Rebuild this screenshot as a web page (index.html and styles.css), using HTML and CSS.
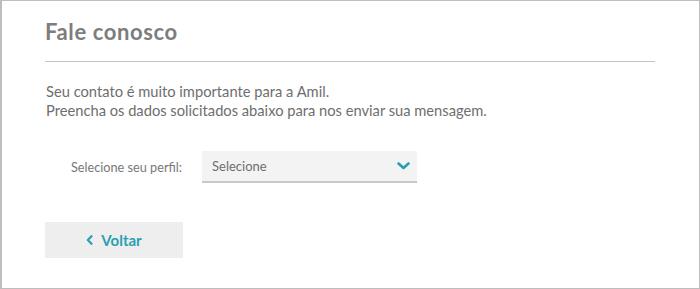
FILE: index.html
```html
<!DOCTYPE html>
<html lang="pt-BR">
<head>
<meta charset="utf-8">
<title>Fale conosco</title>
<link rel="stylesheet" href="styles.css">
</head>
<body>
<div class="frame">
  <div class="content">
    <h1 class="title">Fale conosco</h1>
    <hr class="rule">
    <p class="intro">Seu contato é muito importante para a Amil.<br>Preencha os dados solicitados abaixo para nos enviar sua mensagem.</p>
    <div class="field">
      <label class="label">Selecione seu perfil:</label>
      <div class="select">
        <span class="select-text">Selecione</span>
        <svg class="chevron" width="13" height="8" viewBox="0 0 13 8"><path d="M1.5 1.5 L6.5 6 L11.5 1.5" fill="none" stroke="#2a9fb0" stroke-width="2.6" stroke-linecap="round" stroke-linejoin="round"/></svg>
      </div>
    </div>
    <button class="back">
      <svg class="back-icon" width="7" height="10" viewBox="0 0 7 10"><path d="M5.5 1.2 L1.8 5 L5.5 8.8" fill="none" stroke="#2a9fb0" stroke-width="2.2" stroke-linecap="round" stroke-linejoin="round"/></svg>
      <span>Voltar</span>
    </button>
  </div>
</div>
</body>
</html>
```
FILE: styles.css
```css
* { box-sizing: border-box; }
html, body { margin: 0; padding: 0; background: #fff; }
body { font-family: Lato, "Open Sans", sans-serif; }
.frame {
  width: 700px;
  height: 289px;
  border: 1px solid #bdbdbd;
  border-left-width: 2px;
  background: #fff;
}
.content {
  padding: 17px 44px 0 43px;
}
.title {
  margin: 0;
  font-size: 22px;
  font-weight: 700;
  color: #7d7d7d;
  line-height: 28px;
  letter-spacing: 0.6px;
}
.rule {
  margin: 15px 0 0 0;
  border: 0;
  border-top: 1px solid #c4c4c4;
  height: 0;
}
.intro {
  margin: 20px 0 0 1px;
  font-size: 14.7px;
  line-height: 19px;
  color: #6e6e6e;
}
.field {
  display: flex;
  align-items: center;
  margin-top: 31px;
  padding-left: 26px;
}
.label {
  font-size: 12.7px;
  color: #777;
  width: 131px;
}
.select {
  width: 215px;
  height: 32px;
  background: #f3f3f3;
  border-bottom: 2px solid #c9c9c9;
  display: flex;
  align-items: center;
  justify-content: space-between;
  padding: 0 7px 0 10px;
}
.select-text {
  font-size: 13px;
  color: #6e6e6e;
}
.back {
  margin-top: 39px;
  width: 138px;
  height: 36px;
  border: 0;
  background: #eeeeee;
  display: flex;
  align-items: center;
  justify-content: center;
  gap: 8px;
  font-family: inherit;
  font-size: 15px;
  font-weight: 700;
  color: #2a9fb0;
  padding: 0;
}
```
